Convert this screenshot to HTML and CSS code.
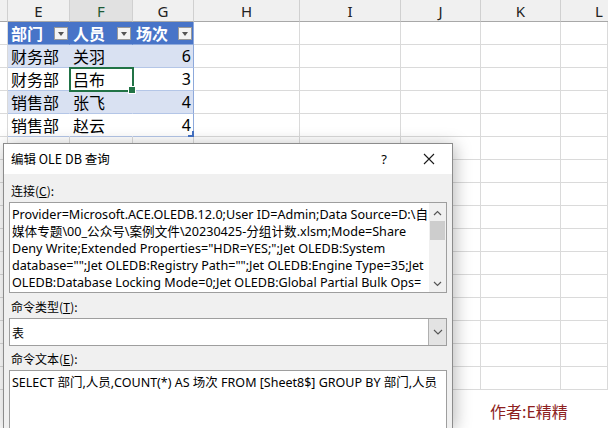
FILE: index.html
```html
<!DOCTYPE html>
<html lang="zh-CN">
<head>
<meta charset="utf-8">
<title>编辑 OLE DB 查询</title>
<link rel="stylesheet" href="styles.css">
</head>
<body>
<div class="sheet">
  <div class="hdr"></div><div class="hdr">E</div><div class="hdr sel">F</div><div class="hdr">G</div><div class="hdr">H</div><div class="hdr">I</div><div class="hdr">J</div><div class="hdr">K</div><div class="hdr cut">L</div>

  <div class="c"></div><div class="c th">部门<b class="flt"></b></div><div class="c th">人员<b class="flt"></b></div><div class="c th tr">场次<b class="flt"></b></div><div class="c"></div><div class="c"></div><div class="c"></div><div class="c"></div><div class="c"></div>

  <div class="c"></div><div class="c band">财务部</div><div class="c band">关羽</div><div class="c band num tr">6</div><div class="c"></div><div class="c"></div><div class="c"></div><div class="c"></div><div class="c"></div>

  <div class="c"></div><div class="c tb">财务部</div><div class="c tb active">吕布</div><div class="c tb num tr">3</div><div class="c"></div><div class="c"></div><div class="c"></div><div class="c"></div><div class="c"></div>

  <div class="c"></div><div class="c band">销售部</div><div class="c band">张飞</div><div class="c band num tr">4</div><div class="c"></div><div class="c"></div><div class="c"></div><div class="c"></div><div class="c"></div>

  <div class="c"></div><div class="c tb">销售部</div><div class="c tb">赵云</div><div class="c tb num tr last">4</div><div class="c"></div><div class="c"></div><div class="c"></div><div class="c"></div><div class="c"></div>

  <div class="c"></div><div class="c"></div><div class="c"></div><div class="c"></div><div class="c"></div><div class="c"></div><div class="c"></div><div class="c"></div><div class="c"></div>
  <div class="c"></div><div class="c"></div><div class="c"></div><div class="c"></div><div class="c"></div><div class="c"></div><div class="c"></div><div class="c"></div><div class="c"></div>
  <div class="c"></div><div class="c"></div><div class="c"></div><div class="c"></div><div class="c"></div><div class="c"></div><div class="c"></div><div class="c"></div><div class="c"></div>
  <div class="c"></div><div class="c"></div><div class="c"></div><div class="c"></div><div class="c"></div><div class="c"></div><div class="c"></div><div class="c"></div><div class="c"></div>
  <div class="c"></div><div class="c"></div><div class="c"></div><div class="c"></div><div class="c"></div><div class="c"></div><div class="c"></div><div class="c"></div><div class="c"></div>
  <div class="c"></div><div class="c"></div><div class="c"></div><div class="c"></div><div class="c"></div><div class="c"></div><div class="c"></div><div class="c"></div><div class="c"></div>
  <div class="c"></div><div class="c"></div><div class="c"></div><div class="c"></div><div class="c"></div><div class="c"></div><div class="c"></div><div class="c"></div><div class="c"></div>
  <div class="c"></div><div class="c"></div><div class="c"></div><div class="c"></div><div class="c"></div><div class="c"></div><div class="c"></div><div class="c"></div><div class="c"></div>
  <div class="c"></div><div class="c"></div><div class="c"></div><div class="c"></div><div class="c"></div><div class="c"></div><div class="c"></div><div class="c"></div><div class="c"></div>
  <div class="c"></div><div class="c"></div><div class="c"></div><div class="c"></div><div class="c"></div><div class="c"></div><div class="c"></div><div class="c"></div><div class="c"></div>
  <div class="c"></div><div class="c"></div><div class="c"></div><div class="c"></div><div class="c"></div><div class="c"></div><div class="c"></div><div class="c"></div><div class="c"></div>
</div>

<div class="dialog">
  <div class="titlebar">
    <span class="title">编辑 OLE DB 查询</span>
    <span class="help">?</span>
    <svg class="close" width="12" height="12" viewBox="0 0 12 12"><path d="M1 1 L11 11 M11 1 L1 11" stroke="#1a1a1a" stroke-width="1.1" fill="none"/></svg>
  </div>
  <div class="body">
    <div class="label">连接(<u>C</u>):</div>
    <div class="box conn">
      <div class="lines">
        <div>Provider=Microsoft.ACE.OLEDB.12.0;User ID=Admin;Data Source=D:\自</div>
        <div>媒体专题\00_公众号\案例文件\20230425-分组计数.xlsm;Mode=Share</div>
        <div>Deny Write;Extended Properties="HDR=YES;";Jet OLEDB:System</div>
        <div>database="";Jet OLEDB:Registry Path="";Jet OLEDB:Engine Type=35;Jet</div>
        <div>OLEDB:Database Locking Mode=0;Jet OLEDB:Global Partial Bulk Ops=</div>
      </div>
      <div class="vscroll">
        <svg width="9" height="6" viewBox="0 0 9 6"><path d="M1 5 L4.5 1.5 L8 5" stroke="#555" stroke-width="1.2" fill="none"/></svg>
        <div class="thumb"></div>
        <div class="track"></div>
        <svg width="9" height="6" viewBox="0 0 9 6"><path d="M1 1 L4.5 4.5 L8 1" stroke="#555" stroke-width="1.2" fill="none"/></svg>
      </div>
    </div>
    <div class="label">命令类型(<u>T</u>):</div>
    <div class="box select">
      <span class="value">表</span>
      <span class="ddbtn"><svg width="10" height="6" viewBox="0 0 10 6"><path d="M1 1 L5 5 L9 1" stroke="#555" stroke-width="1.1" fill="none"/></svg></span>
    </div>
    <div class="label">命令文本(<u>E</u>):</div>
    <div class="box cmd">SELECT 部门,人员,COUNT(*) AS 场次 FROM [Sheet8$] GROUP BY 部门,人员</div>
  </div>
</div>

<div class="author">作者:E精精</div>
</body>
</html>
```

FILE: styles.css
```css
* { box-sizing: border-box; }
html, body { margin: 0; padding: 0; }
body {
  width: 608px;
  height: 428px;
  overflow: hidden;
  background: #fff;
  position: relative;
  font-family: "Noto Sans CJK SC", "Noto Sans", sans-serif;
}

.sheet {
  display: grid;
  grid-template-columns: 8px 62px 63px 61px 106px 101px 80px 80px 47px;
  grid-template-rows: 22px;
  grid-auto-rows: 23px;
  width: 608px;
  height: 428px;
  overflow: hidden;
}

.hdr {
  background: #f0f0f0;
  border-right: 1px solid #d0d0d0;
  border-bottom: 1px solid #a8a8a8;
  color: #222;
  font-family: "Noto Sans", sans-serif;
  font-size: 15px;
  display: flex;
  align-items: center;
  justify-content: center;
  padding-top: 1px;
}
.hdr.cut { justify-content: flex-start; padding-left: 34px; border-right: 0; }
.hdr.sel { background: #e1e1e1; color: #1d5a36; }

.c {
  border-right: 1px solid #dadada;
  border-bottom: 1px solid #dadada;
  font-size: 16px;
  line-height: 22px;
  padding-left: 3px;
  color: #000;
  white-space: nowrap;
  position: relative;
}

.th {
  background: #4874c8;
  color: #fff;
  font-weight: bold;
  border-right-color: #4874c8;
  border-bottom-color: #8ea9db;
}
.band {
  background: #d9e1f2;
  border-right-color: #d9e1f2;
  border-bottom-color: #b4c6e7;
}
.tb {
  background: #fff;
  border-right-color: #fff;
  border-bottom-color: #b4c6e7;
}
.tr { border-right: 1px solid #8ea9db; }
.num {
  text-align: right;
  padding-right: 2px;
  font-family: "Noto Sans", sans-serif;
}

.flt {
  position: absolute;
  right: 1px;
  top: 5px;
  width: 14px;
  height: 13px;
  background: #f4f4f4;
  border: 1px solid #9a9a9a;
}
.flt::after {
  content: "";
  position: absolute;
  left: 3px;
  top: 4px;
  border-left: 3.5px solid transparent;
  border-right: 3.5px solid transparent;
  border-top: 4px solid #555;
}

.active { outline: 2px solid #217346; outline-offset: -1px; z-index: 1; }
.active::after {
  content: "";
  position: absolute;
  right: -4px;
  bottom: -4px;
  width: 6px;
  height: 6px;
  background: #217346;
  border: 1px solid #fff;
}
.last::after {
  content: "";
  position: absolute;
  right: -1px;
  bottom: -1px;
  width: 4px;
  height: 4px;
  border-right: 2px solid #4472c4;
  border-bottom: 2px solid #4472c4;
}

/* dialog */
.dialog {
  position: absolute;
  left: 3px;
  top: 143px;
  width: 450px;
  height: 285px;
  background: #f0f0f0;
  border: 1px solid #8c8c8c;
  border-bottom: 0;
  box-shadow: 2px 2px 16px rgba(0, 0, 0, 0.28);
  font-size: 12px;
  color: #000;
  overflow: hidden;
}
.titlebar {
  height: 30px;
  background: #fff;
  display: flex;
  align-items: center;
  padding-left: 7px;
}
.title { flex: 1; font-size: 12.5px; padding-bottom: 1px; }
.help { font-family: "Noto Sans", sans-serif; font-size: 13px; margin-right: 36px; }
.close { margin-right: 17px; }

.body { padding: 9px 5px 0 5px; }
.label { height: 16px; line-height: 16px; margin-bottom: 3px; padding-left: 2px; }
.label u { text-decoration: underline; }

.box {
  background: #fff;
  border: 1px solid #9e9e9e;
}
.conn {
  height: 91px;
  display: flex;
  margin-bottom: 6px;
}
.lines {
  flex: 1;
  padding: 3px 0 0 2px;
  font-family: "Noto Sans", "Noto Sans CJK SC", sans-serif;
  font-size: 12.6px;
  line-height: 17px;
  white-space: nowrap;
  overflow: hidden;
}
.vscroll {
  width: 17px;
  background: #f0f0f0;
  display: flex;
  flex-direction: column;
  align-items: center;
  padding: 7px 0 5px;
}
.thumb { width: 15px; height: 19px; background: #cdcdcd; margin-top: 5px; }
.track { flex: 1; }

.select {
  height: 28px;
  display: flex;
  align-items: center;
  margin-bottom: 5px;
}
.value { flex: 1; padding-left: 2px; font-size: 12px; }
.ddbtn {
  width: 18px;
  height: 26px;
  background: #e3e3e3;
  border-left: 1px solid #b0b0b0;
  display: flex;
  align-items: center;
  justify-content: center;
}
.cmd {
  height: 100px;
  padding: 3px 0 0 2px;
  font-family: "Noto Sans", "Noto Sans CJK SC", sans-serif;
  font-size: 12.5px;
  line-height: 17px;
  white-space: nowrap;
}

.author {
  position: absolute;
  left: 490px;
  top: 400px;
  font-size: 16px;
  line-height: 22px;
  color: #8e1f1f;
}
```
